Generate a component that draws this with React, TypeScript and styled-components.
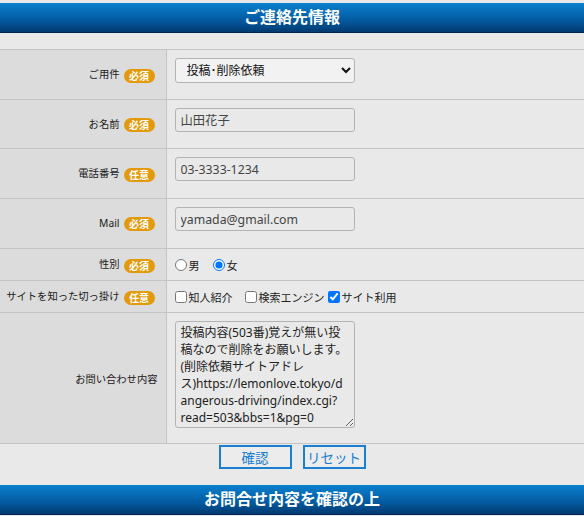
import { createGlobalStyle, styled } from 'styled-components'

const GlobalStyle = createGlobalStyle`
  html, body {
    margin: 0;
    padding: 0;
    background: #e9e9e9;
  }
  body {
    font-family: 'Noto Sans', 'Noto Sans CJK JP', sans-serif;
    color: #222;
  }
`

const Page = styled.div`
  padding-top: 3px;
  width: 584px;
`

const SectionTitle = styled.h2<{ $gap: number }>`
  margin: 0;
  margin-top: ${(p) => p.$gap}px;
  height: 30px;
  line-height: 29px;
  text-align: center;
  font-size: 16px;
  font-weight: bold;
  color: #fff;
  background: linear-gradient(#0a80cf, #035aa0 60%, #013a70);
  border-bottom: 1px solid #00264d;
  box-sizing: border-box;
`

const FormTable = styled.table`
  width: 100%;
  margin-top: 16px;
  border-collapse: collapse;
  border-top: 1px solid #c4c4c4;
  border-bottom: 1px solid #c4c4c4;
`

const Row = styled.tr<{ $h: number }>`
  height: ${(p) => p.$h}px;
  border-top: 1px solid #c4c4c4;
`

const LabelCell = styled.th`
  width: 166px;
  box-sizing: border-box;
  padding: 0 8px 0 0;
  background: #dcdcdc;
  border-right: 1px solid #c4c4c4;
  text-align: right;
  font-size: 10.3px;
  font-weight: normal;
  white-space: nowrap;
  color: #1a1a1a;
`

const ValueCell = styled.td<{ $top?: boolean }>`
  padding: 0 0 0 8px;
  vertical-align: ${(p) => (p.$top ? 'top' : 'middle')};
  padding-top: ${(p) => (p.$top ? '8px' : '0')};
`

const Badge = styled.span`
  display: inline-block;
  margin: 0 3px 0 4px;
  width: 31px;
  height: 14px;
  line-height: 14px;
  border-radius: 7px;
  background: #e29a0a;
  color: #fff;
  font-size: 10px;
  font-weight: bold;
  text-align: center;
  vertical-align: middle;
`

const Field = styled.input`
  box-sizing: border-box;
  width: 180px;
  height: 24px;
  margin: 0 0 9px;
  padding: 0 5px;
  border: 1px solid #b3b3b3;
  border-radius: 3px;
  background: #e9e9e9;
  font-family: 'Noto Sans', 'Noto Sans CJK JP', sans-serif;
  font-size: 12.3px;
  color: #444;
  display: block;
`

const Select = styled.select`
  box-sizing: border-box;
  width: 180px;
  height: 25px;
  margin: 0 0 9px;
  padding: 0 7px;
  border: 1px solid #b3b3b3;
  border-radius: 3px;
  background: #f2f2f2;
  font-family: 'Noto Sans', 'Noto Sans CJK JP', sans-serif;
  font-size: 12px;
  color: #111;
  display: block;
`

const Area = styled.textarea`
  box-sizing: border-box;
  width: 180px;
  height: 107px;
  padding: 2px 5px;
  border: 1px solid #b3b3b3;
  border-radius: 3px;
  background: #e9e9e9;
  font-family: 'Noto Sans', 'Noto Sans CJK JP', sans-serif;
  font-size: 12px;
  line-height: 17px;
  color: #222;
  resize: vertical;
  display: block;
  overflow: hidden;
`

const Choices = styled.div`
  display: flex;
  align-items: center;
  font-size: 11px;
`

const Choice = styled.label<{ $gap: number }>`
  display: inline-flex;
  align-items: center;
  margin-right: ${(p) => p.$gap}px;

  input {
    margin: 0 2px 0 0;
    width: 12px;
    height: 12px;
  }
`

const Buttons = styled.div`
  display: flex;
  justify-content: center;
  gap: 11px;
  padding: 1px 0 0 0;
`

const Button = styled.button<{ $w: number }>`
  width: ${(p) => p.$w}px;
  height: 24px;
  box-sizing: border-box;
  border: 2px solid #1a7ed1;
  background: #ececec;
  color: #1a7ed1;
  font-family: 'Noto Sans', 'Noto Sans CJK JP', sans-serif;
  font-size: 13.5px;
  padding: 0;
`

const Req = () => <Badge>必須</Badge>
const Opt = () => <Badge>任意</Badge>

const message =
  '投稿内容(503番)覚えが無い投稿なので削除をお願いします。(削除依頼サイトアドレス)https://lemonlove.tokyo/dangerous-driving/index.cgi?read=503&bbs=1&pg=0'

const App = () => {
  return (
    <Page>
      <GlobalStyle />
      <SectionTitle $gap={0}>ご連絡先情報</SectionTitle>
      <FormTable>
        <tbody>
          <Row $h={50}>
            <LabelCell>
              ご用件<Req />
            </LabelCell>
            <ValueCell>
              <Select defaultValue="投稿･削除依頼">
                <option>投稿･削除依頼</option>
              </Select>
            </ValueCell>
          </Row>
          <Row $h={49}>
            <LabelCell>
              お名前<Req />
            </LabelCell>
            <ValueCell>
              <Field defaultValue="山田花子" />
            </ValueCell>
          </Row>
          <Row $h={50}>
            <LabelCell>
              電話番号<Opt />
            </LabelCell>
            <ValueCell>
              <Field defaultValue="03-3333-1234" />
            </ValueCell>
          </Row>
          <Row $h={50}>
            <LabelCell>
              Mail<Req />
            </LabelCell>
            <ValueCell>
              <Field defaultValue="yamada@gmail.com" />
            </ValueCell>
          </Row>
          <Row $h={32}>
            <LabelCell>
              性別<Req />
            </LabelCell>
            <ValueCell>
              <Choices>
                <Choice $gap={13}>
                  <input type="radio" name="sex" />男
                </Choice>
                <Choice $gap={0}>
                  <input type="radio" name="sex" defaultChecked />女
                </Choice>
              </Choices>
            </ValueCell>
          </Row>
          <Row $h={32}>
            <LabelCell>
              サイトを知った切っ掛け<Opt />
            </LabelCell>
            <ValueCell>
              <Choices>
                <Choice $gap={12}>
                  <input type="checkbox" />知人紹介
                </Choice>
                <Choice $gap={3}>
                  <input type="checkbox" />検索エンジン
                </Choice>
                <Choice $gap={0}>
                  <input type="checkbox" defaultChecked />サイト利用
                </Choice>
              </Choices>
            </ValueCell>
          </Row>
          <Row $h={131}>
            <LabelCell>お問い合わせ内容</LabelCell>
            <ValueCell $top>
              <Area defaultValue={message} />
            </ValueCell>
          </Row>
        </tbody>
      </FormTable>
      <Buttons>
        <Button $w={73}>確認</Button>
        <Button $w={63}>リセット</Button>
      </Buttons>
      <SectionTitle $gap={16}>お問合せ内容を確認の上</SectionTitle>
    </Page>
  )
}

export default App
